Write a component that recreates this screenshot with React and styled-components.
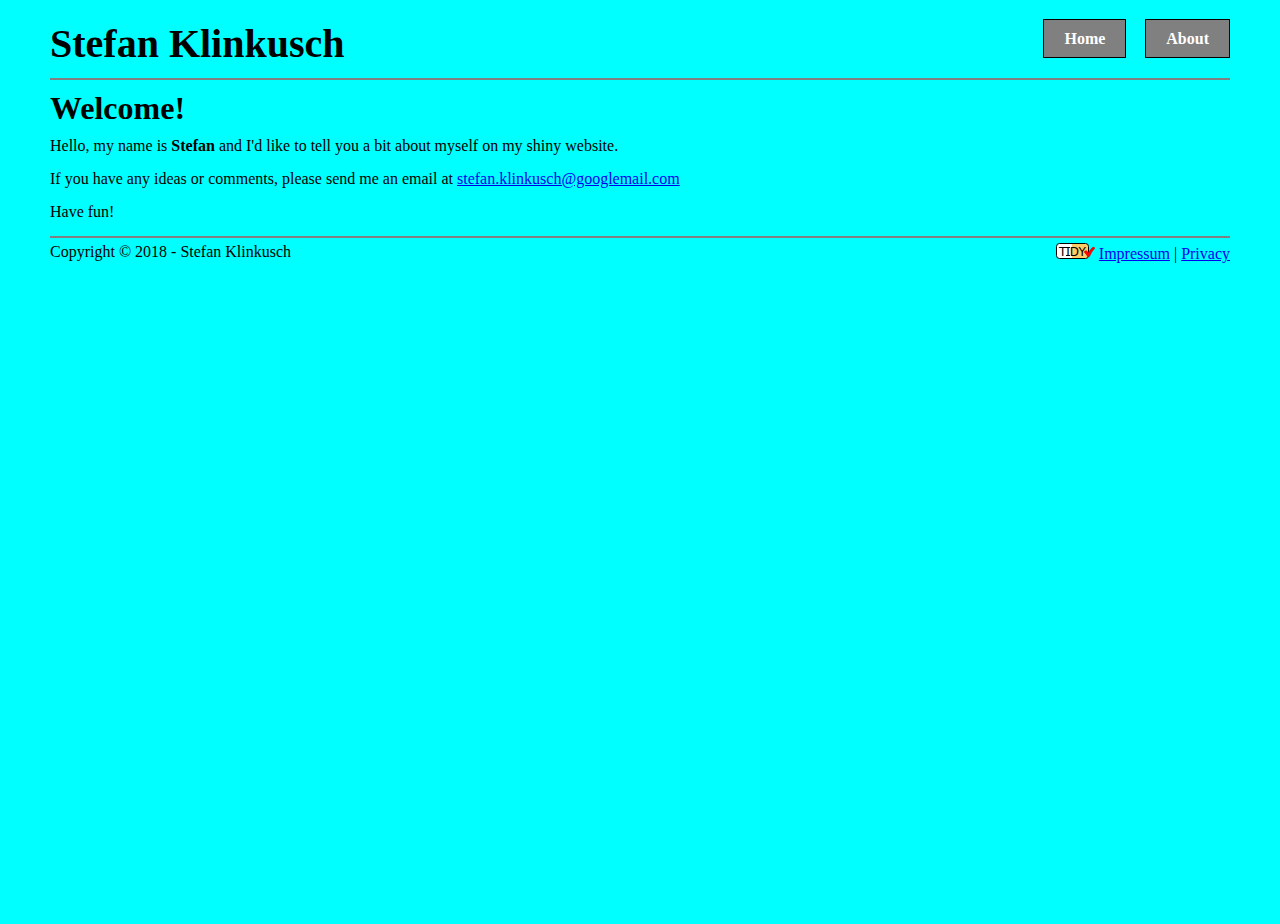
import React from "react";
import styled, { createGlobalStyle } from "styled-components";

const GlobalStyle = createGlobalStyle`
  body {
    margin: 0 50px;
    background: #00ffff;
    color: #000;
    font-family: "Liberation Serif", "Times New Roman", serif;
    font-size: 16px;
    line-height: 18px;
  }
`;

const Header = styled.header`
  display: flex;
  justify-content: space-between;
  align-items: flex-start;
  padding: 19px 0 11px;
  border-bottom: 2px solid #808080;
`;

const SiteTitle = styled.h1`
  margin: 0;
  padding-top: 2px;
  font-size: 40px;
  line-height: 46px;
`;

const Nav = styled.nav`
  display: flex;
  gap: 19px;
`;

const NavLink = styled.a`
  padding: 10px 20px;
  border: 1px solid #000;
  background: #808080;
  color: #fff;
  font-weight: bold;
  line-height: 17px;
  text-decoration: none;
`;

const Main = styled.main`
  padding: 10px 0 15px;
  border-bottom: 2px solid #808080;
`;

const Heading = styled.h2`
  margin: 0 0 10px;
  font-size: 32px;
  line-height: 37px;
`;

const Paragraph = styled.p`
  margin: 0;

  & + & {
    margin-top: 15px;
  }
`;

const Link = styled.a`
  color: #0000ee;
  text-decoration: underline;
`;

const Footer = styled.footer`
  display: flex;
  justify-content: space-between;
  align-items: flex-start;
  padding-top: 5px;
`;

const FooterLinks = styled.div`
  line-height: 20px;
`;

const Badge = styled.svg`
  width: 39px;
  height: 16px;
  vertical-align: baseline;
`;

function TidyBadge() {
  return (
    <Badge viewBox="0 0 39 16" role="img" aria-label="HTML Tidy">
      <rect x="0.5" y="0.5" width="32" height="15" rx="3" fill="#fff" />
      <path d="M16 1H30Q32 1 32 3V13Q32 15 30 15H16Z" fill="#ffcc66" />
      <rect x="0.5" y="0.5" width="32" height="15" rx="3" fill="none" stroke="#000" />
      <text x="3" y="13" fontFamily="DejaVu Sans, sans-serif" fontSize="12" fill="#000">
        TIDY
      </text>
      <path d="M10 4.5H14M10 12.5H14" stroke="#000" />
      <path
        d="M28 9L30 7.5L32.5 9.5Q34.5 6 37 4L39 5Q35.5 8.5 33.5 13.5H31.5Q30.5 11 28 9Z"
        fill="#ff0000"
        stroke="#cc0000"
        strokeWidth="0.5"
      />
    </Badge>
  );
}

export default function App() {
  return (
    <>
      <GlobalStyle />
      <Header>
        <SiteTitle>Stefan Klinkusch</SiteTitle>
        <Nav>
          <NavLink href="#home">Home</NavLink>
          <NavLink href="#about">About</NavLink>
        </Nav>
      </Header>
      <Main>
        <Heading>Welcome!</Heading>
        <Paragraph>
          Hello, my name is <strong>Stefan</strong> and I'd like to tell you a bit about myself on my shiny website.
        </Paragraph>
        <Paragraph>
          If you have any ideas or comments, please send me an email at{" "}
          <Link href="mailto:stefan.klinkusch@googlemail.com">stefan.klinkusch@googlemail.com</Link>
        </Paragraph>
        <Paragraph>Have fun!</Paragraph>
      </Main>
      <Footer>
        <span>Copyright © 2018 - Stefan Klinkusch</span>
        <FooterLinks>
          <TidyBadge /> <Link href="#impressum">Impressum</Link> | <Link href="#privacy">Privacy</Link>
        </FooterLinks>
      </Footer>
    </>
  );
}
